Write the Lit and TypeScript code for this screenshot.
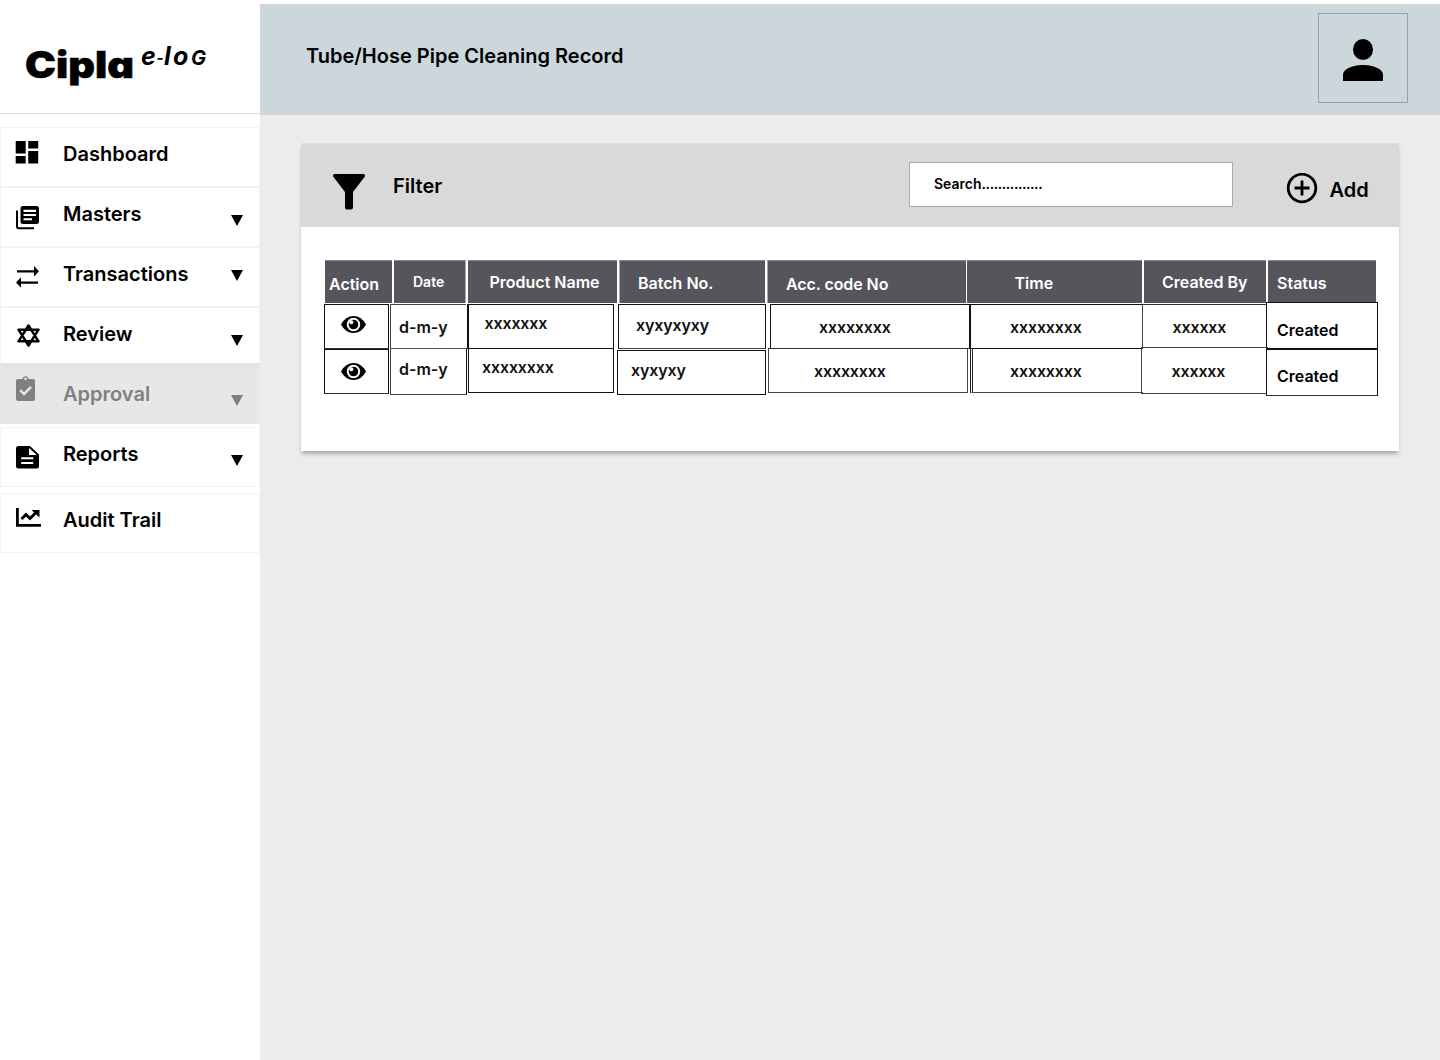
import { LitElement, html, svg, css } from "lit";
import { customElement } from "lit/decorators.js";

const icons: Record<string, unknown> = {
  dashboard: svg`<path d="M16 141h10v12.500h-10zM28.500 141h10v7.500h-10zM16 156h10v7.500h-10zM28.500 151h10v12.500h-10z" transform="translate(-16.300 -141)"/>`,
  masters: svg`<path d="M1 4.500V20.500q0 1.700 1.700 1.700H18" fill="none" stroke="#000" stroke-width="2"/><path fill-rule="evenodd" d="M7 0H20.500Q23 0 23 2.500V15.500Q23 18 20.500 18H7Q4.500 18 4.500 15.500V2.500Q4.500 0 7 0ZM7.500 3.800V5.900H20V3.800ZM7.500 8V10H20V8ZM7.500 12.200V14.300H16V12.200Z"/>`,
  transactions: svg`<path d="M1 4.200H18V0L23 5.300 18 10.500V6.400H1ZM22 15.500H5V11.300L0 16.600 5 21.800V17.700H22Z"/>`,
  review: svg`<path d="M11.500 1.500 21.500 17.300H1.500ZM11.500 21.500 1.500 5.700H21.500Z" fill="none" stroke="#000" stroke-width="2.500" stroke-linejoin="round"/>`,
  approval: svg`<path fill-rule="evenodd" d="M2 3H6.700A2.800 2.800 0 0 1 12.300 3H17Q19 3 19 5V23Q19 25 17 25H2Q0 25 0 23V5Q0 3 2 3ZM9.500 1.500A1.300 1.300 0 0 0 9.500 4.200 1.300 1.300 0 0 0 9.500 1.500ZM5 13.200 3.300 15 8 19.700 16 11.800 14.200 10 8 16.200Z"/>`,
  reports: svg`<path fill-rule="evenodd" d="M2.500 0H14L23 8.500V20Q23 22.500 20.500 22.500H2.500Q0 22.500 0 20V2.500Q0 0 2.500 0ZM13 1.900V9H20.800ZM5.200 11.300V13.300H17.300V11.300ZM5.200 15.900V18H17.300V15.900Z"/>`,
  audit: svg`<path d="M1.400 0V17.400H25" fill="none" stroke="#000" stroke-width="2.800"/><path d="M5.500 11 10 6.500 14 10.500 20 4.500" fill="none" stroke="#000" stroke-width="3"/><path d="M15.500 2H23.500V9.500Z"/>`,
};

const menu = [
  { id: "dashboard", label: "Dashboard", arrow: false },
  { id: "masters", label: "Masters", arrow: true },
  { id: "transactions", label: "Transactions", arrow: true },
  { id: "review", label: "Review", arrow: true },
  { id: "approval", label: "Approval", arrow: true },
  { id: "reports", label: "Reports", arrow: true },
  { id: "audit", label: "Audit Trail", arrow: false },
];

const headings = ["Action", "Date", "Product Name", "Batch No.", "Acc. code No", "Time", "Created By", "Status"];
const records = [
  ["d-m-y", "xxxxxxx", "xyxyxyxy", "xxxxxxxx", "xxxxxxxx", "xxxxxx", "Created"],
  ["d-m-y", "xxxxxxxx", "xyxyxy", "xxxxxxxx", "xxxxxxxx", "xxxxxx", "Created"],
];

@customElement("side-menu")
class SideMenu extends LitElement {
  static styles = css`
    :host { display: block; width: 260px; background: #fff; font: 600 20px/24px Inter, sans-serif; color: #000; }
    * { box-sizing: border-box; }
    .brand { height: 114px; border-bottom: 1px solid #d9d9d9; padding: 40px 0 0 20px; }
    .brand svg { display: block; }
    .word { font: 900 37px Inter, sans-serif; font-feature-settings: "cv11"; stroke: #000; stroke-width: 0.5; }
    .sub { font: italic 700 25px Inter, sans-serif; }
    .dash { font-size: 15px; }
    .small { font-size: 20px; }
    .items { padding-top: 13px; }
    .item { display: flex; align-items: flex-start; height: 60px; border: 1px solid #f3f3f3; padding: 0 16px 0 14px; }
    .icon { width: 48px; }
    .icon svg { display: block; overflow: visible; margin-left: 1px; }
    .label { flex: 1; padding-top: 14px; }
    .arrow { width: 12px; height: 11px; margin-top: 27px; background: #000; clip-path: polygon(0 0, 100% 0, 50% 100%); }
    .dashboard .icon { padding-top: 13px; }
    .masters .icon { padding-top: 18px; }
    .transactions .icon { padding-top: 18px; }
    .transactions .arrow { margin-top: 22px; }
    .review .icon { padding: 16px 0 0 1px; }
    .approval { height: 61px; margin: -4px 0 3px; background: #e7e7e7; border: 0; border-top: 4px solid #e3e3e3; padding: 0 17px 0 15px; color: #808080; }
    .approval .icon { padding-top: 9px; fill: #808080; }
    .approval .label { padding-top: 15px; }
    .approval .arrow { background: #808080; margin-top: 28px; }
    .reports .icon { padding-top: 18px; }
    .reports { margin-bottom: 6px; }
    .audit .icon { padding-top: 14px; }
  `;
  render() {
    return html`
      <div class="brand">
        <svg width="200" height="50" viewBox="20 40 200 50">
          <text class="word" x="25" y="78" textLength="109" lengthAdjust="spacingAndGlyphs">Cipla</text>
          <text class="sub" y="65"><tspan x="141">e</tspan><tspan class="dash" x="156.500" dy="-2">-</tspan><tspan x="164" dy="2">l</tspan><tspan x="173">o</tspan><tspan class="small" x="191">G</tspan></text>
        </svg>
      </div>
      <nav class="items">
        ${menu.map(
          (m) => html`<div class="item ${m.id}">
            <span class="icon"><svg width="25" height="25">${icons[m.id]}</svg></span>
            <span class="label">${m.label}</span>
            ${m.arrow ? html`<span class="arrow"></span>` : ""}
          </div>`
        )}
      </nav>
    `;
  }
}

@customElement("record-table")
class RecordTable extends LitElement {
  static styles = css`
    :host { display: block; font: 600 16px/20px Inter, sans-serif; color: #111; }
    * { box-sizing: border-box; }
    .row { display: flex; align-items: flex-start; }
    .row > div { flex: none; white-space: nowrap; border: 1px solid #111; }
    .eye { display: block; }

    .head { height: 42px; padding-left: 1px; color: #fff; }
    .head > div { height: 43px; border: 0; border-top: 1px solid #88868b; background: #57555c; }
    .head > :nth-child(1) { width: 67px; margin-right: 2px; padding: 13px 0 0 4px; }
    .head > :nth-child(2) { width: 72px; margin-right: 2px; padding: 11px 0 0 19px; font-size: 14px; border-right: 1px solid #aaa9ac; }
    .head > :nth-child(3) { width: 149px; margin-right: 2px; padding: 11px 0 0 21.500px; }
    .head > :nth-child(4) { width: 146px; margin-right: 2px; padding: 12px 0 0 18px; border-left: 1px solid #aaa9ac; }
    .head > :nth-child(5) { width: 199px; margin-right: 1px; padding: 13px 0 0 18px; border-left: 1px solid #aaa9ac; letter-spacing: -0.08px; }
    .head > :nth-child(6) { width: 175px; margin-right: 2px; padding: 12px 0 0 47.500px; }
    .head > :nth-child(7) { width: 122px; margin-right: 2px; padding: 11px 0 0 18px; }
    .head > :nth-child(8) { width: 108px; padding: 12px 0 0 9px; }

    .r0 > :nth-child(n + 3):nth-child(-n + 7), .r1 > :nth-child(n + 3):nth-child(-n + 7) { letter-spacing: -0.14px; }
    .r0 { height: 46px; }
    .r0 > div { height: 45px; margin-top: 2px; }
    .r0 > :nth-child(1) { width: 65px; padding: 11px 0 0 16px; border-bottom-color: #333; }
    .r0 > :nth-child(2) { width: 76px; margin: 2px 1px 0 1px; padding: 12px 0 0 8px; border-left: 1px solid #444; border-right: 0; border-top-color: #444; border-bottom-color: #555; }
    .r0 > :nth-child(3) { width: 147px; padding: 8px 0 0 15.500px; border-left-width: 2px; }
    .r0 > :nth-child(4) { width: 148px; margin-left: 4px; padding: 10px 0 0 17px; border-bottom-color: #444; }
    .r0 > :nth-child(5) { width: 200px; margin-left: 4px; padding: 12px 0 0 48px; border-bottom-color: #444; }
    .r0 > :nth-child(6) { width: 174px; margin-left: -1px; padding: 12px 0 0 39px; border-left-width: 2px; border-right-color: #444; }
    .r0 > :nth-child(7) { width: 125px; margin-left: -1px; padding: 12px 0 0 29.500px; border-top-color: #333; border-left-color: #444; border-bottom: 0; }
    .r0 > :nth-child(8) { width: 112px; height: 47px; margin: 0 0 0 -1px; padding: 17px 0 0 10px; color: #000; }

    .r1 > div { height: 45px; }
    .r1 > :nth-child(1) { width: 65px; margin-top: 1px; height: 45px; padding: 13px 0 0 16px; border-bottom-color: #333; }
    .r1 > :nth-child(2) { width: 77px; height: 47px; margin-left: 1px; padding: 10px 0 0 8px; border-color: #555 #111 #444 #444; }
    .r1 > :nth-child(3) { width: 146px; margin-left: 1px; padding: 8px 0 0 13px; }
    .r1 > :nth-child(4) { width: 149px; margin: 2px 0 0 3px; padding: 9px 0 0 13px; }
    .r1 > :nth-child(5) { width: 200px; margin-left: 2px; padding: 12px 0 0 45px; border-color: #333 #444 #444; }
    .r1 > :nth-child(6) { width: 173px; margin-left: 2px; padding: 12px 0 0 37px; border-left: 3px double #222; border-bottom-color: #444; border-right: 0; }
    .r1 > :nth-child(7) { width: 127px; height: 47px; margin: -1px 0 0 -2px; padding: 13px 0 0 29.500px; border-color: #444; border-right: 0; }
    .r1 > :nth-child(8) { width: 112px; height: 47px; margin: 1px 0 0 -2px; padding: 16px 0 0 10px; background: #fff; color: #000; border-bottom-color: #333; }
  `;
  render() {
    return html`
      <div class="row head">${headings.map((h) => html`<div>${h}</div>`)}</div>
      ${records.map(
        (r, i) => html`<div class="row r${i}">
          <div>
            <svg class="eye" width="25" height="17" viewBox="0 0 25 17">
              <path d="M0 8.500Q4.500 0 12.500 0T25 8.500Q20.500 17 12.500 17T0 8.500Z" />
              <circle cx="12.500" cy="8.500" r="6.700" fill="#fff" />
              <circle cx="12.500" cy="8.500" r="4.800" />
              <circle cx="10.400" cy="6.300" r="2" fill="#fff" />
            </svg>
          </div>
          ${r.map((c) => html`<div>${c}</div>`)}
        </div>`
      )}
    `;
  }
}

@customElement("app-root")
class AppRoot extends LitElement {
  static styles = css`
    :host { display: flex; height: 1060px; background: #fff; font: 600 20px/24px Inter, sans-serif; color: #000; overflow: hidden; }
    * { box-sizing: border-box; }
    side-menu { flex: none; }
    .main { flex: 1; margin-top: 4px; background: #ececec; }
    .top { display: flex; justify-content: space-between; height: 111px; padding: 9px 32px 0 46px; background: #ccd7dc; border-bottom: 4px solid #d0d7dc; }
    .title { padding-top: 31px; }
    .avatar { width: 90px; height: 90px; border: 1px solid #93a0a7; padding: 25px 0 0 24px; }
    .avatar svg, .funnel, .plus { display: block; }
    .card { width: 1098px; height: 308px; margin: 28px 0 0 41px; background: #fff; box-shadow: 0 4px 4px -1px rgba(0, 0, 0, 0.28); }
    .bar { display: flex; align-items: flex-start; height: 84px; padding-left: 32px; background: #d9d9d9; border-top: 1px solid #e0e0e0; }
    .bar > * { flex: none; }
    .funnel { margin-top: 30px; }
    .filter { width: 544px; padding: 30px 0 0 28px; }
    .search { width: 324.400px; height: 45px; margin-top: 18px; padding: 11px 24px; background: #fff; border: 1px solid #b5a5a5; font-size: 14px; line-height: 20px; }
    .dots { letter-spacing: -0.42px; }
    .plus { margin: 29px 0 0 52.600px; }
    .add { padding: 34px 0 0 11.500px; }
    record-table { margin: 33px 0 0 23px; }
  `;
  render() {
    return html`
      <side-menu></side-menu>
      <div class="main">
        <header class="top">
          <div class="title">Tube/Hose Pipe Cleaning Record</div>
          <div class="avatar">
            <svg width="40" height="42"><ellipse cx="20" cy="10.500" rx="10" ry="10.500" /><path d="M0 42V36C0 29 12 26 20 26S40 29 40 36V42Z" /></svg>
          </div>
        </header>
        <section class="card">
          <div class="bar">
            <svg class="funnel" width="32" height="36"><path d="M1.500 0H30.500Q33 .5 31.500 3L20 18V33.500Q20 35.500 18 35.500H14Q12 35.500 12 33.500V18L.5 3Q-1 .5 1.500 0Z" /></svg>
            <div class="filter">Filter</div>
            <div class="search">Search<span class="dots">...............</span></div>
            <svg class="plus" width="32" height="32" fill="none" stroke="#000"><circle cx="16" cy="15" r="13.800" stroke-width="2.800" /><path d="M16 7.500V22.500M8.500 15H23.500" stroke-width="2.800" /></svg>
            <div class="add">Add</div>
          </div>
          <record-table></record-table>
        </section>
      </div>
    `;
  }
}
